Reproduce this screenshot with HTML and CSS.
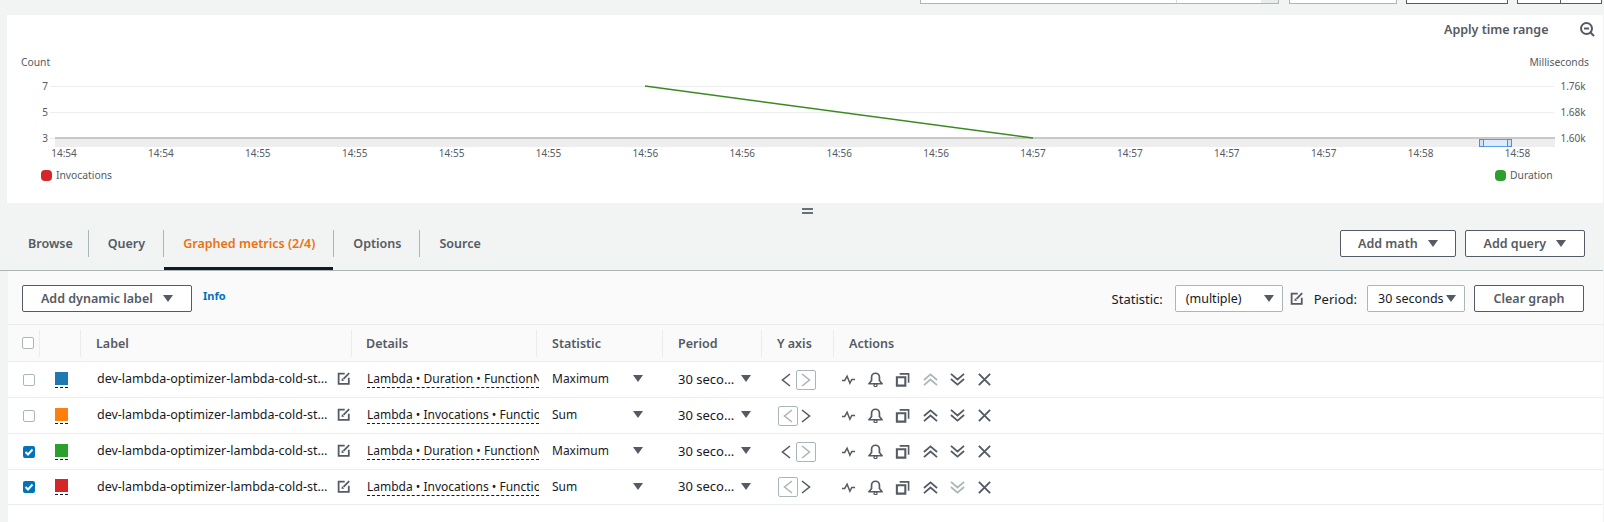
FILE: index.html
```html
<!DOCTYPE html>
<html lang="en">

<head>
    <meta charset="UTF-8">
    <meta name="viewport" content="width=device-width, initial-scale=1.0">
    <title>Graphed metrics</title>
    <link rel="stylesheet" href="styles.css">
</head>

<body>
    <svg class="icon-defs" width="0" height="0">
        <symbol id="i-edit" viewBox="0 0 16 16">
            <path d="M9.500 2H2v12.500h12.500V7" fill="none" stroke="currentColor" stroke-width="2.200" />
            <path d="M15 1.500L8 8.500" fill="none" stroke="currentColor" stroke-width="2.200" />
            <path d="M6 7.500l3 3-3.500.5z" fill="currentColor" />
        </symbol>
        <symbol id="i-pulse" viewBox="0 0 16 16">
            <path d="M1 9h3l2.500-4.500 3 7.500L11.500 8H15" fill="none" stroke="currentColor" stroke-width="1.600" />
        </symbol>
        <symbol id="i-bell" viewBox="0 0 16 16">
            <path d="M1 12.500h14l-2.800-3.500V5.500a4.200 4.200 0 0 0-8.400 0V9z" fill="none" stroke="currentColor" stroke-width="1.800" stroke-linejoin="round" />
            <circle cx="8" cy="14" r="1.600" fill="none" stroke="currentColor" stroke-width="1.400" />
        </symbol>
        <symbol id="i-copy" viewBox="0 0 16 16">
            <path d="M2 5.500h9v9H2z" fill="none" stroke="currentColor" stroke-width="2.200" />
            <path d="M5 2h9.500v9.500" fill="none" stroke="currentColor" stroke-width="1.700" />
        </symbol>
        <symbol id="i-up" viewBox="0 0 16 16">
            <path d="M1 8.500l7-6 7 6M1 14l7-6 7 6" fill="none" stroke="currentColor" stroke-width="1.900" />
        </symbol>
        <symbol id="i-down" viewBox="0 0 16 16">
            <path d="M1 2l7 6 7-6M1 7.500l7 6 7-6" fill="none" stroke="currentColor" stroke-width="1.900" />
        </symbol>
        <symbol id="i-close" viewBox="0 0 16 16">
            <path d="M2 2l12 12M14 2L2 14" fill="none" stroke="currentColor" stroke-width="2" />
        </symbol>
        <symbol id="i-left" viewBox="0 0 10 14">
            <path d="M9 1L1.500 7 9 13" fill="none" stroke="currentColor" stroke-width="1.600" />
        </symbol>
        <symbol id="i-right" viewBox="0 0 10 14">
            <path d="M1 1l7.500 6L1 13" fill="none" stroke="currentColor" stroke-width="1.600" />
        </symbol>
    </svg>

    <div class="top-controls">
        <div class="cut cut-range"><span class="cut-a"></span><span class="cut-b"></span><span class="cut-c"></span></div>
        <div class="cut cut-select"></div>
        <div class="cut cut-btn"></div>
        <div class="cut cut-group"><span></span><span></span></div>
    </div>

    <section class="chart-panel">
        <svg class="chart" width="1596" height="188" viewBox="7 15 1596 188">
            <text class="apply" x="1444" y="34">Apply time range</text>
            <g class="zoom-out" fill="none" stroke="#545b64" stroke-width="2">
                <circle cx="1586.500" cy="28.500" r="5.500" />
                <path d="M1584 28.500h5M1590.500 32.500l3.500 3.500" />
            </g>

            <text class="axis" x="21" y="66">Count</text>
            <text class="axis" x="1589" y="66" text-anchor="end">Milliseconds</text>

            <path class="grid" d="M50 86.500H1554M50 112.500H1554" />
            <path d="M50 138.500H55" stroke="#eaeded" />
            <rect x="55" y="139" width="1500" height="8" fill="#eeeeee" />
            <rect x="55" y="137" width="1500" height="2" fill="#c9c9c9" />
            <rect class="brush" x="1479.500" y="139.500" width="32" height="7" />
            <rect class="brush-handle" x="1479.500" y="139.500" width="4" height="7" />
            <rect class="brush-handle" x="1507.500" y="139.500" width="4" height="7" />
            <path d="M645 86L1033 138" fill="none" stroke="#3a8a20" stroke-width="1.500" />

            <text class="tick" x="45" y="90" text-anchor="middle">7</text>
            <text class="tick" x="45" y="116" text-anchor="middle">5</text>
            <text class="tick" x="45" y="142" text-anchor="middle">3</text>
            <text class="tick" x="1573" y="90" text-anchor="middle">1.76k</text>
            <text class="tick" x="1573" y="116" text-anchor="middle">1.68k</text>
            <text class="tick" x="1573" y="142" text-anchor="middle">1.60k</text>

            <g class="tick" text-anchor="middle">
                <text x="64" y="157">14:54</text>
                <text x="160.900" y="157">14:54</text>
                <text x="257.800" y="157">14:55</text>
                <text x="354.700" y="157">14:55</text>
                <text x="451.600" y="157">14:55</text>
                <text x="548.500" y="157">14:55</text>
                <text x="645.400" y="157">14:56</text>
                <text x="742.300" y="157">14:56</text>
                <text x="839.200" y="157">14:56</text>
                <text x="936.100" y="157">14:56</text>
                <text x="1033" y="157">14:57</text>
                <text x="1129.900" y="157">14:57</text>
                <text x="1226.800" y="157">14:57</text>
                <text x="1323.700" y="157">14:57</text>
                <text x="1420.600" y="157">14:58</text>
                <text x="1517.500" y="157">14:58</text>
            </g>

            <rect x="41" y="170" width="11" height="11" rx="4" fill="#d62728" />
            <text class="axis" x="56" y="179">Invocations</text>
            <rect x="1495" y="170" width="11" height="11" rx="4" fill="#2ca02c" />
            <text class="axis" x="1510" y="179">Duration</text>
        </svg>
    </section>

    <div class="resize-handle"></div>

    <nav class="tab-bar">
        <div class="tabs">
            <a class="tab tab-first">Browse</a>
            <a class="tab">Query</a>
            <a class="tab tab-active">Graphed metrics (2/4)</a>
            <a class="tab">Options</a>
            <a class="tab tab-last">Source</a>
        </div>
        <div class="tab-actions">
            <button class="btn btn-math">Add math <i class="caret"></i></button>
            <button class="btn btn-query">Add query <i class="caret"></i></button>
        </div>
    </nav>

    <section class="metrics">
        <div class="toolbar">
            <button class="btn btn-label">Add dynamic label <i class="caret"></i></button>
            <a class="info">Info</a>
            <div class="toolbar-right">
                <span class="field-label field-stat">Statistic:</span>
                <div class="select select-stat">(multiple) <i class="caret"></i></div>
                <svg class="edit-icon edit-gap"><use href="#i-edit" /></svg>
                <span class="field-label">Period:</span>
                <div class="select select-period">30 seconds <i class="caret"></i></div>
                <button class="btn btn-clear">Clear graph</button>
            </div>
        </div>

        <table class="metric-table">
            <colgroup>
                <col class="c-check">
                <col class="c-color">
                <col class="c-label">
                <col class="c-details">
                <col class="c-stat">
                <col class="c-period">
                <col class="c-axis">
                <col>
            </colgroup>
            <thead>
                <tr>
                    <th><div class="th-box th-check"><span class="check"></span></div></th>
                    <th><div class="th-box"></div></th>
                    <th><div class="th-box">Label</div></th>
                    <th><div class="th-box th-details">Details</div></th>
                    <th><div class="th-box">Statistic</div></th>
                    <th><div class="th-box">Period</div></th>
                    <th><div class="th-box">Y axis</div></th>
                    <th><div class="th-box th-last">Actions</div></th>
                </tr>
            </thead>
            <tbody>
                <tr>
                    <td><span class="check"></span></td>
                    <td><span class="swatch swatch-blue"></span></td>
                    <td><div class="label-cell"><span>dev-lambda-optimizer-lambda-cold-st…</span><svg class="edit-icon"><use href="#i-edit" /></svg></div></td>
                    <td><div class="details">Lambda • Duration • FunctionN</div></td>
                    <td><div class="pick pick-stat">Maximum<i class="caret"></i></div></td>
                    <td><div class="pick pick-period">30 seco…<i class="caret"></i></div></td>
                    <td>
                        <div class="axis-cell axis-right">
                            <svg class="chev"><use href="#i-left" /></svg>
                            <span class="chev-box"><svg class="chev"><use href="#i-right" /></svg></span>
                        </div>
                    </td>
                    <td>
                        <div class="actions">
                            <svg><use href="#i-pulse" /></svg>
                            <svg><use href="#i-bell" /></svg>
                            <svg><use href="#i-copy" /></svg>
                            <svg class="off"><use href="#i-up" /></svg>
                            <svg><use href="#i-down" /></svg>
                            <svg><use href="#i-close" /></svg>
                        </div>
                    </td>
                </tr>
                <tr>
                    <td><span class="check"></span></td>
                    <td><span class="swatch swatch-orange"></span></td>
                    <td><div class="label-cell"><span>dev-lambda-optimizer-lambda-cold-st…</span><svg class="edit-icon"><use href="#i-edit" /></svg></div></td>
                    <td><div class="details">Lambda • Invocations • Functio</div></td>
                    <td><div class="pick pick-stat">Sum<i class="caret"></i></div></td>
                    <td><div class="pick pick-period">30 seco…<i class="caret"></i></div></td>
                    <td>
                        <div class="axis-cell">
                            <span class="chev-box"><svg class="chev"><use href="#i-left" /></svg></span>
                            <svg class="chev"><use href="#i-right" /></svg>
                        </div>
                    </td>
                    <td>
                        <div class="actions">
                            <svg><use href="#i-pulse" /></svg>
                            <svg><use href="#i-bell" /></svg>
                            <svg><use href="#i-copy" /></svg>
                            <svg><use href="#i-up" /></svg>
                            <svg><use href="#i-down" /></svg>
                            <svg><use href="#i-close" /></svg>
                        </div>
                    </td>
                </tr>
                <tr>
                    <td><span class="check check-on"><svg viewBox="0 0 12 12"><path d="M2.500 6l2.500 2.500 4.500-5" /></svg></span></td>
                    <td><span class="swatch swatch-green"></span></td>
                    <td><div class="label-cell"><span>dev-lambda-optimizer-lambda-cold-st…</span><svg class="edit-icon"><use href="#i-edit" /></svg></div></td>
                    <td><div class="details">Lambda • Duration • FunctionN</div></td>
                    <td><div class="pick pick-stat">Maximum<i class="caret"></i></div></td>
                    <td><div class="pick pick-period">30 seco…<i class="caret"></i></div></td>
                    <td>
                        <div class="axis-cell axis-right">
                            <svg class="chev"><use href="#i-left" /></svg>
                            <span class="chev-box"><svg class="chev"><use href="#i-right" /></svg></span>
                        </div>
                    </td>
                    <td>
                        <div class="actions">
                            <svg><use href="#i-pulse" /></svg>
                            <svg><use href="#i-bell" /></svg>
                            <svg><use href="#i-copy" /></svg>
                            <svg><use href="#i-up" /></svg>
                            <svg><use href="#i-down" /></svg>
                            <svg><use href="#i-close" /></svg>
                        </div>
                    </td>
                </tr>
                <tr>
                    <td><span class="check check-on"><svg viewBox="0 0 12 12"><path d="M2.500 6l2.500 2.500 4.500-5" /></svg></span></td>
                    <td><span class="swatch swatch-red"></span></td>
                    <td><div class="label-cell"><span>dev-lambda-optimizer-lambda-cold-st…</span><svg class="edit-icon"><use href="#i-edit" /></svg></div></td>
                    <td><div class="details">Lambda • Invocations • Functio</div></td>
                    <td><div class="pick pick-stat">Sum<i class="caret"></i></div></td>
                    <td><div class="pick pick-period">30 seco…<i class="caret"></i></div></td>
                    <td>
                        <div class="axis-cell">
                            <span class="chev-box"><svg class="chev"><use href="#i-left" /></svg></span>
                            <svg class="chev"><use href="#i-right" /></svg>
                        </div>
                    </td>
                    <td>
                        <div class="actions">
                            <svg><use href="#i-pulse" /></svg>
                            <svg><use href="#i-bell" /></svg>
                            <svg><use href="#i-copy" /></svg>
                            <svg><use href="#i-up" /></svg>
                            <svg class="off"><use href="#i-down" /></svg>
                            <svg><use href="#i-close" /></svg>
                        </div>
                    </td>
                </tr>
            </tbody>
        </table>
    </section>
</body>

</html>
```
FILE: styles.css
```css
html {
    overflow: hidden;
}

body {
    font-family: "Noto Sans", Arial, sans-serif;
    font-size: 12px;
    margin: 0;
    height: 522px;
    overflow: hidden;
    background-color: #f2f3f3;
    color: #16191f;
}

.icon-defs {
    position: absolute;
}

/* controls cut off by the top of the screenshot */
.top-controls {
    height: 15px;
    display: flex;
    align-items: flex-start;
    padding-left: 920px;
}

.cut {
    height: 4px;
    box-sizing: border-box;
    background-color: #fff;
    border: 1px solid #aab7b8;
    border-top: none;
}

.cut-range {
    width: 359px;
    display: flex;
}

.cut-a {
    width: 255px;
    border-right: 1px solid #d5dbdb;
}

.cut-b {
    flex: 1;
}

.cut-c {
    width: 17px;
    background-color: #eaeded;
}

.cut-select {
    width: 108px;
    margin-left: 10px;
}

.cut-btn {
    width: 102px;
    margin-left: 9px;
    border-color: #545b64;
}

.cut-group {
    width: 85px;
    margin-left: 9px;
    border-color: #545b64;
    display: flex;
}

.cut-group span:first-child {
    width: 42px;
    border-right: 1px solid #545b64;
}

/* chart */
.chart-panel {
    height: 188px;
    margin: 0 1px 0 7px;
    background-color: #fff;
}

.chart {
    display: block;
}

.chart text {
    font-family: "Noto Sans", Arial, sans-serif;
}

.apply {
    font-size: 12.500px;
    font-weight: 600;
    fill: #545b64;
}

.axis {
    font-size: 10.300px;
    fill: #545b64;
}

.tick {
    font-size: 10px;
    fill: #545b64;
}

.grid {
    fill: none;
    stroke: #eeeeee;
}

.brush {
    fill: #dcecfc;
    stroke: #5b9fe6;
}

.brush-handle {
    fill: #cfe4fa;
    stroke: #4a90e2;
}

.resize-handle {
    width: 11px;
    height: 2px;
    margin: 5px 0 0 802px;
    border-top: 2px solid #687078;
    border-bottom: 2px solid #687078;
}

/* tabs */
.tab-bar {
    margin: 16px 1px 0 0;
    height: 40px;
    display: flex;
    justify-content: space-between;
    align-items: flex-start;
    padding: 0 18px 0 9px;
    border-bottom: 1px solid #aab7b8;
}

.tabs {
    display: flex;
    height: 40px;
}

.tab {
    height: 27px;
    line-height: 27px;
    padding: 0 18px 0 19px;
    font-size: 12.500px;
    font-weight: 600;
    color: #545b64;
    border-right: 1px solid #aab7b8;
    position: relative;
}

.tab-first {
    padding-right: 15px;
}

.tab-last {
    border-right: none;
}

.tab-active {
    color: #ec7211;
}

.tab-active::after {
    content: "";
    position: absolute;
    left: 0;
    right: 0;
    top: 37px;
    height: 3px;
    background-color: #16191f;
}

.tab-actions {
    display: flex;
    gap: 9px;
}

.btn {
    height: 27px;
    box-sizing: border-box;
    padding: 0;
    background-color: #fff;
    border: 1px solid #545b64;
    border-radius: 2px;
    font-family: inherit;
    font-size: 12.500px;
    font-weight: 600;
    color: #545b64;
}

.btn-math {
    width: 116px;
}

.btn-query {
    width: 120px;
}

.btn-label {
    width: 170px;
}

.btn-clear {
    width: 110px;
    margin-left: 9px;
}

.caret {
    display: inline-block;
    width: 0;
    height: 0;
    margin-left: 7px;
    vertical-align: 1px;
    border-left: 5px solid transparent;
    border-right: 5px solid transparent;
    border-top: 7px solid #545b64;
}

/* metrics table */
.metrics {
    margin: 0 1px 0 8px;
    height: 251px;
    background-color: #fff;
}

.toolbar {
    height: 54px;
    box-sizing: border-box;
    padding: 14px 19px 0 14px;
    display: flex;
    align-items: flex-start;
    background-color: #fafafa;
    border-bottom: 1px solid #eaeded;
}

.info {
    margin: 3px 0 0 11px;
    font-size: 11px;
    font-weight: 700;
    color: #0073bb;
}

.toolbar-right {
    margin-left: auto;
    display: flex;
    align-items: center;
    height: 27px;
}

.field-label {
    font-size: 13px;
    color: #16191f;
    margin-right: 10px;
}

.field-stat {
    margin-right: 12px;
}

.select {
    height: 27px;
    box-sizing: border-box;
    background-color: #fff;
    border: 1px solid #aab7b8;
    border-radius: 2px;
    font-size: 12.500px;
    white-space: nowrap;
    display: flex;
    justify-content: space-between;
    align-items: center;
    padding: 0 8px 0 10px;
}

.select-stat {
    width: 108px;
}

.select-period {
    width: 98px;
}

.select .caret {
    margin: 0;
}

.edit-icon {
    width: 13px;
    height: 13px;
    color: #545b64;
    flex: none;
}

.edit-gap {
    margin: 0 11px 0 7px;
}

.metric-table {
    width: 100%;
    table-layout: fixed;
    border-collapse: collapse;
}

.c-check {
    width: 32px;
}

.c-color {
    width: 41px;
}

.c-label {
    width: 271px;
}

.c-details {
    width: 185px;
}

.c-stat {
    width: 126px;
}

.c-period {
    width: 99px;
}

.c-axis {
    width: 72px;
}

th {
    height: 36px;
    padding: 0;
    background-color: #fafafa;
    border-bottom: 1px solid #eaeded;
    text-align: left;
}

.th-box {
    height: 27px;
    line-height: 27px;
    padding-left: 15px;
    font-size: 12.500px;
    font-weight: 600;
    color: #545b64;
    border-right: 1px solid #eaeded;
}

.th-details {
    padding-left: 14px;
}

.th-check {
    display: flex;
    align-items: center;
    padding-left: 14px;
}

.th-last {
    border-right: none;
}

td {
    height: 35px;
    padding: 0 0 0 15px;
    border-bottom: 1px solid #eaeded;
    font-size: 12px;
}

tr:last-child td {
    height: 34px;
}

.check {
    display: block;
    box-sizing: border-box;
    width: 12px;
    height: 12px;
    background-color: #fff;
    border: 1px solid #aab7b8;
    border-radius: 2px;
}

.check-on {
    background-color: #0073bb;
    border: none;
}

.check-on svg {
    display: block;
    width: 12px;
    height: 12px;
    fill: none;
    stroke: #fff;
    stroke-width: 2;
}

.swatch {
    display: block;
    width: 13px;
    height: 13px;
    padding-bottom: 2px;
    border-bottom: 1px dashed #16191f;
    background-clip: content-box;
}

.swatch-blue {
    background-color: #1f77b4;
}

.swatch-orange {
    background-color: #ff7f0e;
}

.swatch-green {
    background-color: #2ca02c;
}

.swatch-red {
    background-color: #d62728;
}

.label-cell {
    display: flex;
    align-items: center;
    justify-content: space-between;
    width: 253px;
    margin: 0 0 2px 1px;
    font-size: 12.500px;
}

.label-cell span {
    white-space: nowrap;
}

.details {
    white-space: nowrap;
    overflow: hidden;
    border-bottom: 1px dashed #16191f;
    margin: 0 -2px 1px 0;
    line-height: 17px;
}

.pick {
    display: flex;
    justify-content: space-between;
    align-items: center;
    margin-bottom: 2px;
}

.pick .caret {
    margin: 0;
}

.pick-stat {
    width: 91px;
}

.pick-period {
    width: 73px;
    font-size: 13px;
}

.axis-cell {
    display: flex;
    align-items: center;
    gap: 3px;
    margin-left: 1px;
}

.axis-right {
    padding-left: 3px;
    gap: 5px;
}

.chev {
    display: block;
    width: 10px;
    height: 14px;
    color: #545b64;
}

.chev-box {
    width: 20px;
    height: 20px;
    box-sizing: border-box;
    display: flex;
    align-items: center;
    justify-content: center;
    border: 1px solid #aab7b8;
    border-radius: 2px;
}

.chev-box .chev {
    color: #aab7b8;
}

.actions {
    display: flex;
    gap: 12.200px;
    margin-left: -8px;
    color: #545b64;
}

.actions svg {
    display: block;
    width: 15px;
    height: 15px;
}

.actions .off {
    color: #aab7b8;
}
```
